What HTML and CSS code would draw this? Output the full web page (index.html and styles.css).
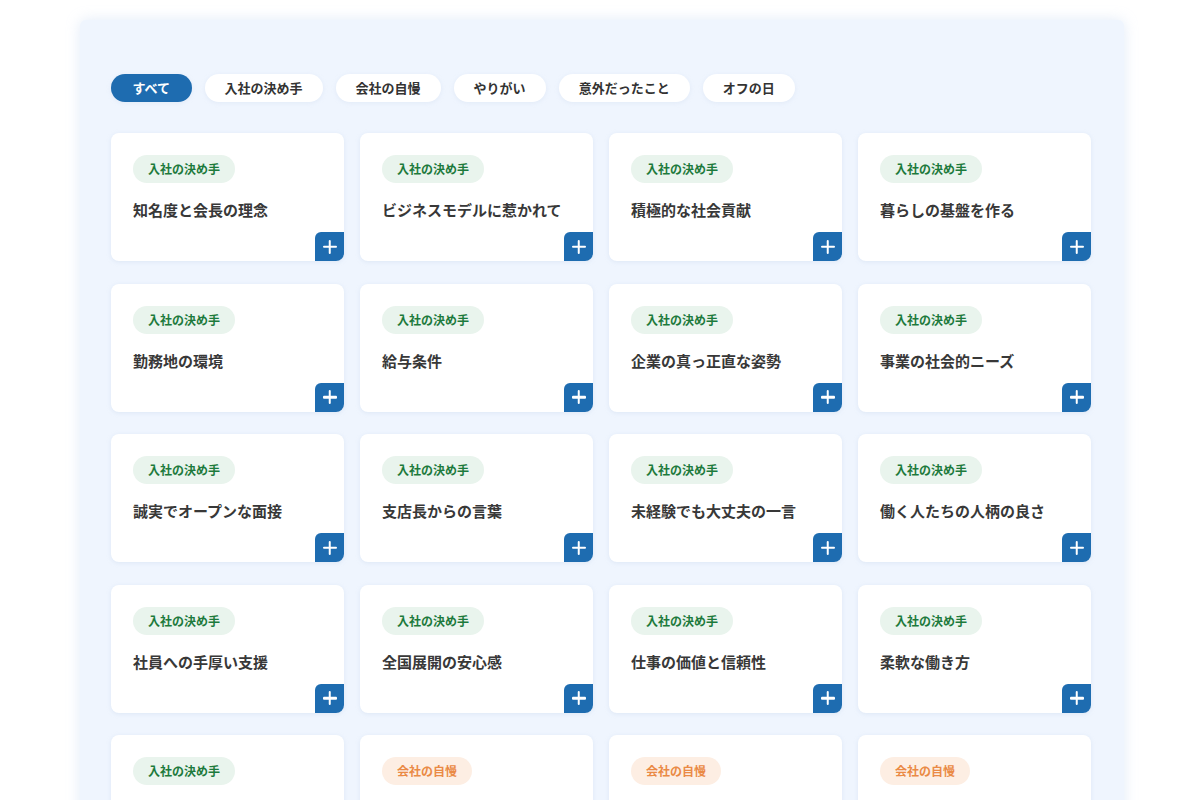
FILE: index.html
```html
<!DOCTYPE html>
<html lang="ja">
<head>
<meta charset="utf-8">
<link rel="stylesheet" href="styles.css">
</head>
<body>
<div class="panel">
  <div class="filters">
    <span class="chip active">すべて</span>
    <span class="chip">入社の決め手</span>
    <span class="chip">会社の自慢</span>
    <span class="chip">やりがい</span>
    <span class="chip">意外だったこと</span>
    <span class="chip">オフの日</span>
  </div>
  <div class="grid">
    <div class="card"><span class="tag green">入社の決め手</span><p class="title">知名度と会長の理念</p><span class="plus"></span></div>
    <div class="card"><span class="tag green">入社の決め手</span><p class="title">ビジネスモデルに惹かれて</p><span class="plus"></span></div>
    <div class="card"><span class="tag green">入社の決め手</span><p class="title">積極的な社会貢献</p><span class="plus"></span></div>
    <div class="card"><span class="tag green">入社の決め手</span><p class="title">暮らしの基盤を作る</p><span class="plus"></span></div>
    <div class="card"><span class="tag green">入社の決め手</span><p class="title">勤務地の環境</p><span class="plus"></span></div>
    <div class="card"><span class="tag green">入社の決め手</span><p class="title">給与条件</p><span class="plus"></span></div>
    <div class="card"><span class="tag green">入社の決め手</span><p class="title">企業の真っ正直な姿勢</p><span class="plus"></span></div>
    <div class="card"><span class="tag green">入社の決め手</span><p class="title">事業の社会的ニーズ</p><span class="plus"></span></div>
    <div class="card"><span class="tag green">入社の決め手</span><p class="title">誠実でオープンな面接</p><span class="plus"></span></div>
    <div class="card"><span class="tag green">入社の決め手</span><p class="title">支店長からの言葉</p><span class="plus"></span></div>
    <div class="card"><span class="tag green">入社の決め手</span><p class="title">未経験でも大丈夫の一言</p><span class="plus"></span></div>
    <div class="card"><span class="tag green">入社の決め手</span><p class="title">働く人たちの人柄の良さ</p><span class="plus"></span></div>
    <div class="card"><span class="tag green">入社の決め手</span><p class="title">社員への手厚い支援</p><span class="plus"></span></div>
    <div class="card"><span class="tag green">入社の決め手</span><p class="title">全国展開の安心感</p><span class="plus"></span></div>
    <div class="card"><span class="tag green">入社の決め手</span><p class="title">仕事の価値と信頼性</p><span class="plus"></span></div>
    <div class="card"><span class="tag green">入社の決め手</span><p class="title">柔軟な働き方</p><span class="plus"></span></div>
    <div class="card"><span class="tag green">入社の決め手</span><span class="plus"></span></div>
    <div class="card"><span class="tag orange">会社の自慢</span><span class="plus"></span></div>
    <div class="card"><span class="tag orange">会社の自慢</span><span class="plus"></span></div>
    <div class="card"><span class="tag orange">会社の自慢</span><span class="plus"></span></div>
  </div>
</div>
</body>
</html>
```
FILE: styles.css
```css
* { box-sizing: border-box; }
html, body {
  margin: 0;
  background: #ffffff;
  font-family: "Noto Sans CJK JP", "Noto Sans", sans-serif;
  overflow: hidden;
}
.panel {
  margin: 20px 0 0 80px;
  width: 1044px;
  background: #eff5fe;
  border-radius: 6px;
  box-shadow: 0 0 14px rgba(214, 226, 245, 0.7);
  padding: 54px 33px 40px 31px;
  min-height: 900px;
}
.filters {
  display: flex;
  gap: 13px;
  align-items: center;
}
.chip {
  height: 28px;
  line-height: 28px;
  padding: 0 20px;
  border-radius: 14px;
  background: #ffffff;
  color: #333;
  font-size: 13px;
  font-weight: 700;
  box-shadow: 0 1px 4px rgba(200, 214, 235, 0.35);
}
.chip.active {
  background: #1e6cb0;
  color: #fff;
  padding: 0 21.5px;
}
.grid {
  margin-top: 31px;
  display: grid;
  grid-template-columns: repeat(4, 233px);
  column-gap: 16px;
  row-gap: 22.5px;
}
.card {
  position: relative;
  height: 128px;
  background: #ffffff;
  border-radius: 8px;
  padding: 22px 22px 0 22px;
  box-shadow: 0 1px 4px rgba(190, 205, 230, 0.35);
}
.tag {
  display: inline-block;
  height: 28px;
  line-height: 28px;
  padding: 0 15px;
  border-radius: 14px;
  font-size: 12px;
  font-weight: 700;
}
.tag.green { background: #e9f4ed; color: #1d7a3c; }
.tag.orange { background: #fdeee3; color: #ea8a45; }
.title {
  margin: 15px 0 0;
  font-size: 15px;
  font-weight: 700;
  color: #383838;
  line-height: 24px;
}
.plus {
  position: absolute;
  right: 0;
  bottom: 0;
  width: 29px;
  height: 29px;
  background: #1e6cb0;
  border-radius: 6px 0 8px 0;
}
.plus::before, .plus::after {
  content: "";
  position: absolute;
  background: #fff;
  border-radius: 1px;
  left: 50%;
  top: 50%;
}
.plus::before { width: 14px; height: 2.5px; transform: translate(-50%, -50%); }
.plus::after { width: 2.5px; height: 14px; transform: translate(-50%, -50%); }
```
